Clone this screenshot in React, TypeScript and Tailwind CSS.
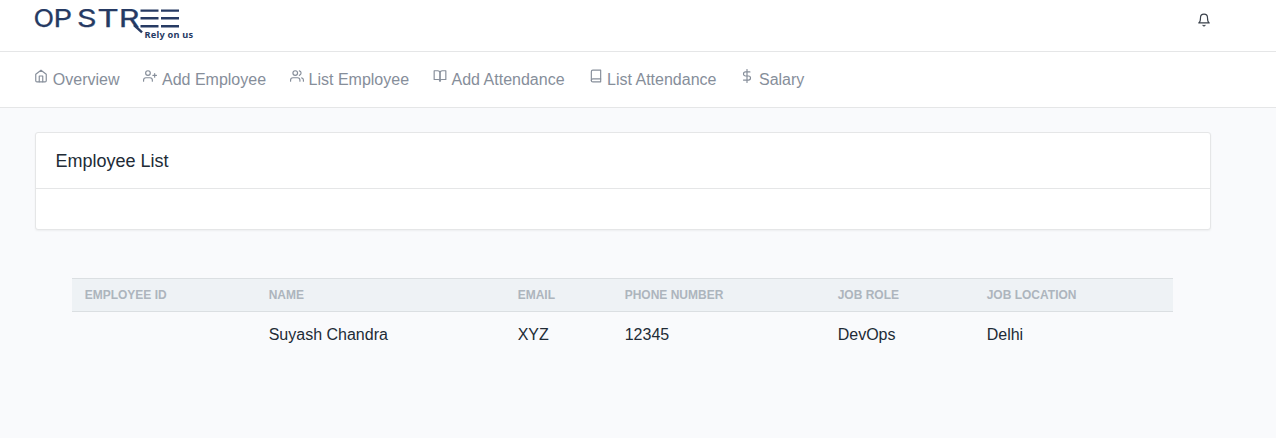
import type { IconType } from "react-icons";
import {
  FiBell,
  FiBook,
  FiBookOpen,
  FiDollarSign,
  FiHome,
  FiUserPlus,
  FiUsers,
} from "react-icons/fi";

const links: { label: string; icon: IconType }[] = [
  { label: "Overview", icon: FiHome },
  { label: "Add Employee", icon: FiUserPlus },
  { label: "List Employee", icon: FiUsers },
  { label: "Add Attendance", icon: FiBookOpen },
  { label: "List Attendance", icon: FiBook },
  { label: "Salary", icon: FiDollarSign },
];

const columns = [
  { title: "Employee ID", value: "", width: "w-[184px]" },
  { title: "Name", value: "Suyash Chandra", width: "w-[249px]" },
  { title: "Email", value: "XYZ", width: "w-[107px]" },
  { title: "Phone Number", value: "12345", width: "w-[213px]" },
  { title: "Job Role", value: "DevOps", width: "w-[149px]" },
  { title: "Job Location", value: "Delhi", width: "w-[199px]" },
];

const wordmark = [
  { letter: "O", x: -0.4, width: 20.6 },
  { letter: "P", x: 19.4, width: 18.6 },
  { letter: "S", x: 43, width: 19.6 },
  { letter: "T", x: 63.2, width: 21.6 },
  { letter: "R", x: 84.8, width: 20.8 },
];

function Logo() {
  return (
    <svg width="162" height="42" viewBox="0 0 162 42" className="block" role="img" aria-label="Opstree">
      <g fill="#263a63" fontFamily="Inter, sans-serif" fontSize="24.5" fontWeight="400" stroke="#263a63" strokeWidth="0.25">
        {wordmark.map((l) => (
          <text key={l.letter} x={l.x} y="27.2" textLength={l.width} lengthAdjust="spacingAndGlyphs">
            {l.letter}
          </text>
        ))}
      </g>
      <g stroke="#263a63" strokeWidth="2.4">
        <path d="M106.5 10.6h18M106.5 18.3h18M106.5 26.2h18M127 10.6h18M127 18.3h18M127 26.2h18" />
        <path d="M100 25l8 7.3" strokeWidth="2.4" />
      </g>
      <text x="110.6" y="38" fill="#263a63" fontFamily="Noto Sans, sans-serif" fontSize="9.2" fontWeight="700" textLength="48.4">
        Rely on us
      </text>
    </svg>
  );
}

export default function App() {
  return (
    <div className="min-h-screen bg-[#f9fafc] font-['Liberation_Sans',Arial,sans-serif] text-base text-[#212b36]">
      <header className="flex h-[52px] items-start justify-between border-b border-[#e5e6e7] bg-white pr-[65.5px] pl-[34px]">
        <Logo />
        <FiBell className="mt-[13px] size-[14px] text-[#3a414b]" />
      </header>

      <nav className="flex h-14 items-start gap-6 border-b border-[#e5e6e7] bg-white pt-4 pl-[34.3px] text-[#868e9a]">
        {links.map(({ label, icon: Icon }) => (
          <a key={label} className="flex items-start gap-[4.5px] leading-6 whitespace-nowrap">
            <Icon className="mt-px size-[14px]" />
            <span>{label}</span>
          </a>
        ))}
      </nav>

      <main className="pt-6 pr-[65px] pl-[35px]">
        <section className="h-[98px] rounded-[3px] border border-[#e5e6e7] bg-white shadow-[0_1px_2px_rgba(0,0,0,0.05)]">
          <h3 className="flex h-14 items-center border-b border-[#e5e6e7] px-[19.5px] text-lg">Employee List</h3>
        </section>

        <table className="mt-12 ml-[37px] w-[1101px] table-fixed border-collapse text-left">
          <thead>
            <tr className="h-[33px] border-y border-[#dbdfe2] bg-[#eef2f5] text-xs text-[#adb5bd] uppercase">
              {columns.map((c) => (
                <th key={c.title} className={`${c.width} py-0 pr-2 pl-[12.7px] font-bold`}>{c.title}</th>
              ))}
            </tr>
          </thead>
          <tbody>
            <tr className="h-[47px]">
              {columns.map((c) => (
                <td key={c.title} className="py-0 pr-2 pl-[12.7px]">{c.value}</td>
              ))}
            </tr>
          </tbody>
        </table>
      </main>
    </div>
  );
}
